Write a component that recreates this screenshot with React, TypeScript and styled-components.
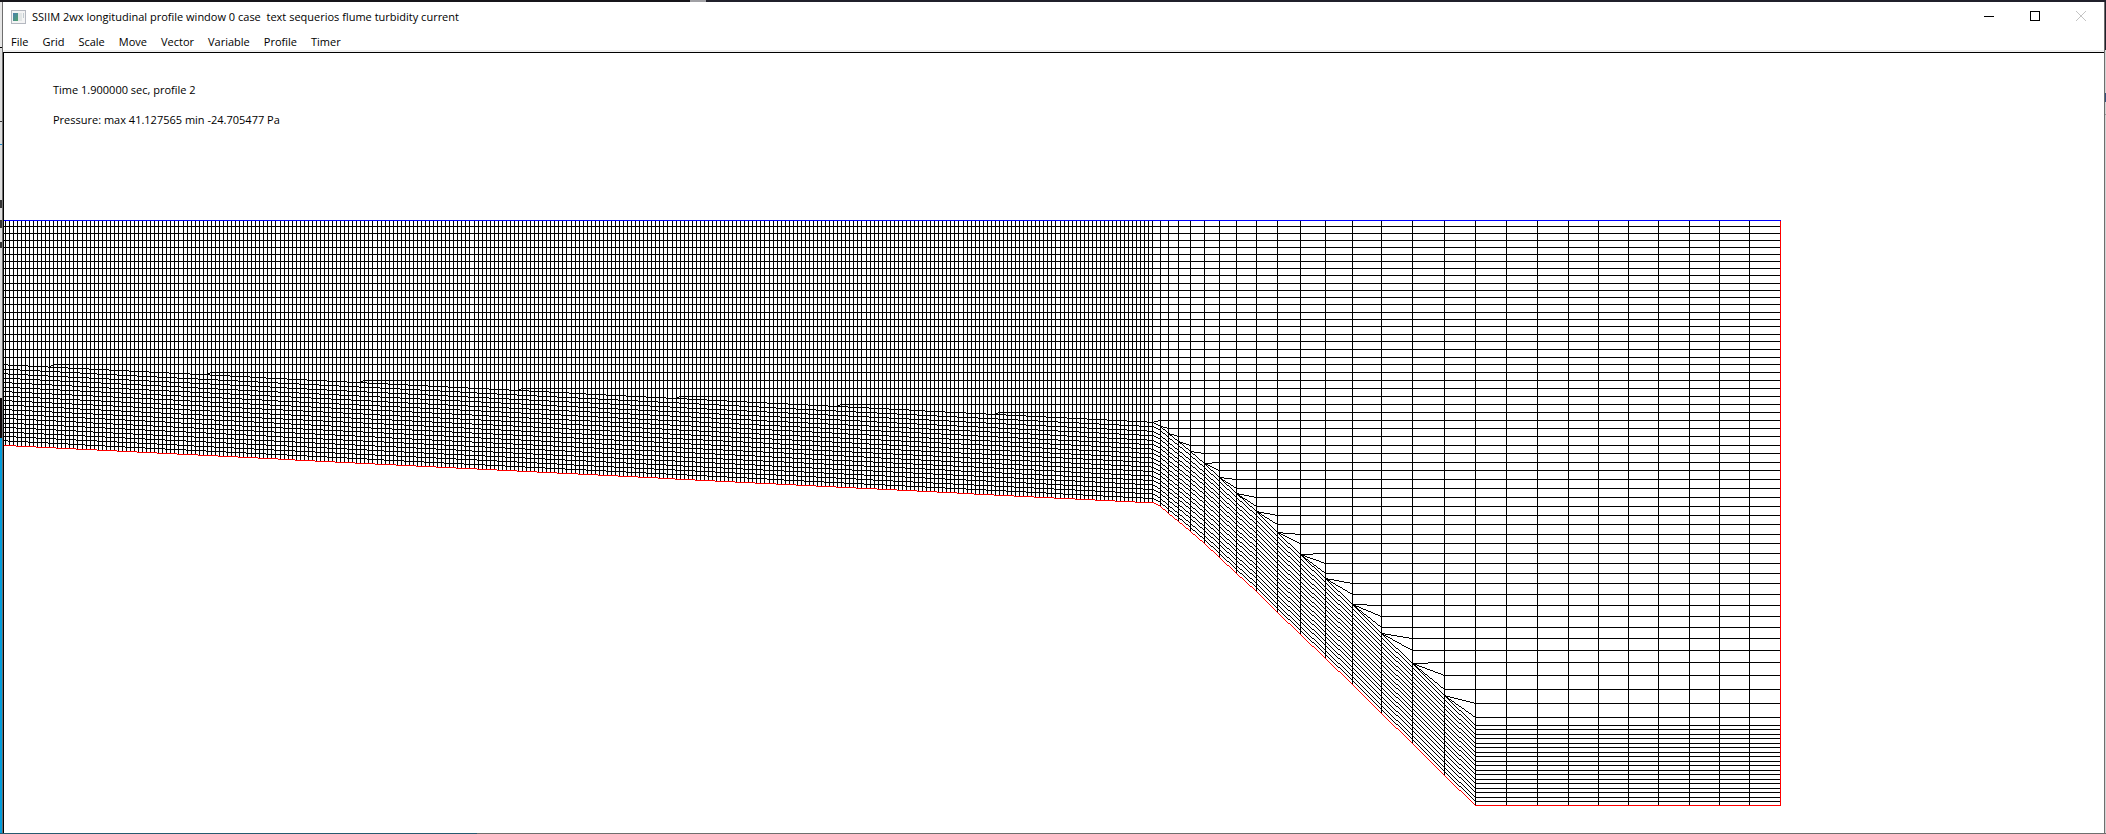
import React from "react";
import styled, { createGlobalStyle } from "styled-components";

const GlobalStyle = createGlobalStyle`
  html, body { margin: 0; padding: 0; background: #fff; }
  body { font-family: "Open Sans", "Noto Sans", sans-serif; font-size: 11px; color: #000; }
`;

const Desktop = styled.div`
  box-sizing: border-box;
  min-height: 100vh;
  display: grid;
  grid-template-columns: 2px minmax(0, 1fr) 1px;
  grid-template-rows: 2px minmax(0, 1fr) 1px;
`;

const TopEdge = styled.div`
  grid-column: 1 / -1;
  background: linear-gradient(90deg, #16151a 0 690px, #a0a0a4 690px 706px, #20202b 706px);
`;

const LeftEdge = styled.div`
  background: linear-gradient(
    180deg,
    #e6e6e6 0 45px, #000 45px 46px, #dedede 46px 119px, #333 119px 120px,
    #dedede 120px 142px, #1a86c8 142px 143px, #dedede 143px 198px, #333 198px 206px,
    #dedede 206px 218px, #333 218px 226px, #dedede 226px 240px, #333 240px 246px,
    #dedede 246px 396px, #0d0809 396px 436px, #009ddc 436px
  );
`;

const RightEdge = styled.div`
  background: linear-gradient(
    180deg,
    #20202b 0 48px, #d4d4d4 48px 91px, #35507c 91px 100px, #d4d4d4 100px 112px,
    #9a9a9a 112px 113px, #d4d4d4 113px
  );
`;

const BottomEdge = styled.div`
  grid-column: 1 / -1;
  background: linear-gradient(90deg, #255a70 0 477px, #6e6e6e 477px);
`;

const Window = styled.main`
  display: flex;
  flex-direction: column;
  background: #fff;
  border-left: 1px solid #6e6e6e;
  border-right: 1px solid #6e6e6e;
`;

const TitleBar = styled.header`
  display: flex;
  align-items: center;
  height: 30px;
  padding-left: 8px;
`;

const Title = styled.h1`
  flex: 1;
  margin: 0 0 0 6px;
  font-size: 11px;
  font-weight: 400;
  line-height: 16px;
  white-space: pre;
`;

const CaptionButton = styled.button`
  display: flex;
  align-items: center;
  justify-content: center;
  align-self: flex-start;
  width: 46px;
  height: 28px;
  padding: 0;
  border: 0;
  background: none;
  color: #000;
  &:disabled { color: #c4c4c4; }
`;

const MenuBar = styled.nav`
  display: flex;
  gap: 14px;
  height: 18px;
  padding-left: 8px;
  border-bottom: 2px solid #f0f0f0;
`;

const MenuButton = styled.button`
  padding: 0;
  border: 0;
  background: none;
  font: inherit;
  line-height: 20px;
  color: #000;
`;

const Canvas = styled.section`
  flex: 1;
  border-top: 1px solid #000;
  border-left: 1px solid #000;
  overflow: hidden;
`;

const Readout = styled.div`
  box-sizing: border-box;
  height: 167px;
  padding: 22px 49px 0;
`;

const ReadoutLine = styled.p`
  margin: 0;
  line-height: 30px;
  white-space: pre;
`;

const Plot = styled.svg`
  display: block;
`;

const MENUS = ["File", "Grid", "Scale", "Move", "Vector", "Variable", "Profile", "Timer"];

// Screen coordinates of the mesh: the water surface and the fixed grid levels.
const SURFACE = 220;
const LEFT = 4;
const BOTTOM = 810;
const LEVELS = [
  226, 233, 240, 247, 254, 261, 268, 275, 283, 290, 297, 304, 312, 319, 326, 334, 341, 349, 357,
  364.6, 372.5, 380.3, 388.2, 396, 404.1, 412.1, 420, 428, 436, 445, 453, 462, 470, 479, 488, 497,
  506, 515, 524, 534, 543, 553, 563, 573, 583, 594, 605, 616, 627, 638, 650, 662, 675, 689, 703, 717,
];

// Columns of the slope and the reservoir, as [x, bed level].
const RESERVOIR: [number, number][] = [
  [1160, 506], [1168, 513], [1178, 521], [1190, 531], [1204, 543], [1219, 557], [1236, 573],
  [1256, 591], [1277, 612], [1300, 634], [1325, 658], [1352, 684], [1381, 713], [1412, 743],
  [1444, 775], [1475, 805], [1506, 805], [1537, 805], [1568, 805], [1598, 805], [1628, 805],
  [1658, 805], [1689, 805], [1719, 805], [1749, 805], [1780, 805],
];

const LAYERS = 18;
const LAYER_HEIGHT = 4.476;

type Column = { x: number; bed: number; top: number };

function buildColumns(): Column[] {
  const raw: [number, number][] = [];
  for (let i = -20; i <= 265; i++) {
    const x = 82 + Math.floor((i * 489) / 121);
    raw.push([x, 446 + (x - 16) / 19.97]);
  }
  RESERVOIR.forEach(([x, y]) => raw.push([x, y + 0.98]));
  return raw.map(([x, bed]) => ({ x, bed, top: bed - LAYERS * LAYER_HEIGHT }));
}

// Aliased line made of horizontal or vertical one-pixel runs.
function line(x0: number, y0: number, x1: number, y1: number): string {
  y0 = Math.floor(y0);
  y1 = Math.floor(y1);
  if (x0 === x1) return `M${x0 + 0.5} ${y0}V${y1 + 1}`;
  const dx = x1 - x0;
  const dy = y1 - y0;
  if (dy === 0) return `M${x0} ${y0 + 0.5}H${x1 + 1}`;
  let d = "";
  const steps = Math.max(dx, Math.abs(dy));
  let start = x0;
  let row = y0;
  let last = x0;
  for (let s = 1; s <= steps; s++) {
    const x = x0 + Math.floor((dx * s) / steps + 0.5);
    const y = y0 + Math.ceil((dy * s) / steps - 0.5);
    if (y !== row) {
      d += `M${start} ${row + 0.5}H${last + 1}`;
      start = x;
      row = y;
    }
    last = x;
  }
  return d + `M${start} ${row + 0.5}H${last + 1}`;
}

function buildMesh() {
  const columns = buildColumns();
  const hasLevel = (c: Column, y: number) => c.top - y >= 2.55;
  const end = columns[columns.length - 1];
  let grid = "";
  let bed = "";
  LEVELS.forEach((y) => {
    const first = columns.findIndex((c) => hasLevel(c, y));
    const start = columns[first];
    grid += line(start.x, y, end.x, y);
    if (first > 0) {
      const before = columns[first - 1];
      grid += line(before.x, before.top, start.x, y);
    }
  });
  columns.forEach((c, i) => {
    if (c !== end) grid += line(c.x, SURFACE, c.x, c.bed);
    if (i === 0) return;
    const before = columns[i - 1];
    for (let n = 1; n <= LAYERS; n++) {
      grid += line(before.x, before.bed - n * LAYER_HEIGHT, c.x, c.bed - n * LAYER_HEIGHT);
    }
    bed += line(before.x, before.bed, c.x, c.bed);
  });
  bed += line(end.x, SURFACE, end.x, end.bed);
  return { grid, bed, surface: line(0, SURFACE, end.x, SURFACE) };
}

const MESH = buildMesh();
const PLOT_WIDTH = 1790 - LEFT;
const PLOT_HEIGHT = BOTTOM - SURFACE;

function AppIcon() {
  return (
    <svg width="15" height="14" viewBox="0 0 15 14" shapeRendering="crispEdges" aria-hidden="true">
      <defs>
        <linearGradient id="pane" x1="0" y1="0" x2="1" y2="1">
          <stop offset="0" stopColor="#4a7fb0" />
          <stop offset="1" stopColor="#4fa26a" />
        </linearGradient>
      </defs>
      <rect width="15" height="14" fill="#b4b8c0" />
      <rect x="1" y="1" width="13" height="12" fill="#f4f4f4" />
      <rect x="2" y="3" width="5" height="8" fill="url(#pane)" />
      <rect x="7" y="3" width="4" height="8" fill="#e2e6e6" />
      <rect x="12" y="3" width="1" height="5" fill="#c2ccd0" />
    </svg>
  );
}

export default function App() {
  return (
    <Desktop>
      <GlobalStyle />
      <TopEdge />
      <LeftEdge />
      <Window>
        <TitleBar>
          <AppIcon />
          <Title>SSIIM 2wx longitudinal profile window 0 case  text sequerios flume turbidity current</Title>
          <CaptionButton aria-label="Minimize">
            <svg width="10" height="10" viewBox="0 0 10 10" shapeRendering="crispEdges">
              <path d="M0 5.5H10" stroke="currentColor" />
            </svg>
          </CaptionButton>
          <CaptionButton aria-label="Maximize">
            <svg width="10" height="10" viewBox="0 0 10 10" shapeRendering="crispEdges">
              <path d="M.5 .5H9.500V9.500H.5Z" fill="none" stroke="currentColor" />
            </svg>
          </CaptionButton>
          <CaptionButton aria-label="Close" disabled>
            <svg width="10" height="10" viewBox="0 0 10 10">
              <path d="M0 0L10 10M10 0L0 10" stroke="currentColor" />
            </svg>
          </CaptionButton>
        </TitleBar>
        <MenuBar>
          {MENUS.map((name) => (
            <MenuButton key={name}>{name}</MenuButton>
          ))}
        </MenuBar>
        <Canvas>
          <Readout>
            <ReadoutLine>Time 1.900000 sec, profile 2</ReadoutLine>
            <ReadoutLine>Pressure: max 41.127565 min -24.705477 Pa</ReadoutLine>
          </Readout>
          <Plot
            width={PLOT_WIDTH}
            height={PLOT_HEIGHT}
            viewBox={`${LEFT} ${SURFACE} ${PLOT_WIDTH} ${PLOT_HEIGHT}`}
            shapeRendering="crispEdges"
            fill="none"
            role="img"
            aria-label="Longitudinal profile grid"
          >
            <path d={MESH.grid} stroke="#000" />
            <path d={MESH.bed} stroke="#f00" />
            <path d={MESH.surface} stroke="#00f" />
          </Plot>
        </Canvas>
      </Window>
      <RightEdge />
      <BottomEdge />
    </Desktop>
  );
}
